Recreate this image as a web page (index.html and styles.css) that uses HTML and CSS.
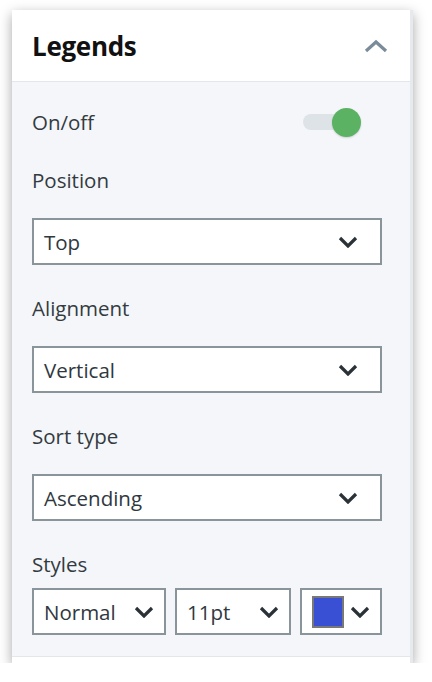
FILE: index.html
```html
<!DOCTYPE html>
<html>
<head>
<meta charset="utf-8">
<link rel="stylesheet" href="styles.css">
</head>
<body>
<div class="panel">
  <div class="header">
    <h1 class="title">Legends</h1>
    <svg class="chev-up" width="24" height="14" viewBox="0 0 24 14"><path d="M2 12 L12 3 L22 12" fill="none" stroke="#7a8c99" stroke-width="3.2"/></svg>
  </div>
  <div class="content">
    <div class="toggle-row">
      <span class="label">On/off</span>
      <div class="toggle"><div class="track"></div><div class="knob"></div></div>
    </div>
    <div class="field">
      <div class="label">Position</div>
      <div class="select"><span>Top</span><svg class="chev" width="20" height="12" viewBox="0 0 20 12"><path d="M2 2 L10 10 L18 2" fill="none" stroke="#2a3238" stroke-width="3.2"/></svg></div>
    </div>
    <div class="field">
      <div class="label">Alignment</div>
      <div class="select"><span>Vertical</span><svg class="chev" width="20" height="12" viewBox="0 0 20 12"><path d="M2 2 L10 10 L18 2" fill="none" stroke="#2a3238" stroke-width="3.2"/></svg></div>
    </div>
    <div class="field">
      <div class="label">Sort type</div>
      <div class="select"><span>Ascending</span><svg class="chev" width="20" height="12" viewBox="0 0 20 12"><path d="M2 2 L10 10 L18 2" fill="none" stroke="#2a3238" stroke-width="3.2"/></svg></div>
    </div>
    <div class="field last">
      <div class="label">Styles</div>
      <div class="style-row">
        <div class="select small s-normal"><span>Normal</span><svg class="chev" width="20" height="12" viewBox="0 0 20 12"><path d="M2 2 L10 10 L18 2" fill="none" stroke="#2a3238" stroke-width="3.2"/></svg></div>
        <div class="select small s-size"><span>11pt</span><svg class="chev" width="20" height="12" viewBox="0 0 20 12"><path d="M2 2 L10 10 L18 2" fill="none" stroke="#2a3238" stroke-width="3.2"/></svg></div>
        <div class="select small s-color"><div class="swatch"></div><svg class="chev" width="20" height="12" viewBox="0 0 20 12"><path d="M2 2 L10 10 L18 2" fill="none" stroke="#2a3238" stroke-width="3.2"/></svg></div>
      </div>
    </div>
  </div>
  <div class="footer"></div>
</div>
</body>
</html>
```
FILE: styles.css
```css
* { box-sizing: border-box; }
html, body { margin: 0; padding: 0; background: #ffffff; }
body { font-family: "Open Sans", "Noto Sans", sans-serif; color: #2f383e; }

.panel {
  margin: 10px 0 0 12px;
  width: 401px;
  background: #ffffff;
  border-right: 3px solid #e6e9ee;
  box-shadow: 0 4px 12px rgba(0,0,0,0.35);
}

.header {
  height: 72px;
  display: flex;
  align-items: center;
  justify-content: space-between;
  padding: 0 20px 0 20px;
  border-bottom: 1px solid #e3e7ec;
}
.title {
  margin: 0;
  font-size: 26px;
  font-weight: 700;
  color: #111;
  letter-spacing: -0.3px;
}
.chev-up { margin-right: 2px; margin-top: 0; }

.content {
  background: #f4f6fa;
  padding: 28px 0 21px 20px;
}
.label {
  font-size: 20.5px;
  line-height: 24px;
  color: #333b40;
}
.toggle-row {
  display: flex;
  align-items: center;
  justify-content: space-between;
  width: 329px;
  height: 24px;
  margin-bottom: 34px;
}
.toggle { position: relative; width: 58px; height: 28px; }
.track {
  position: absolute;
  left: 0; top: 6px;
  width: 40px; height: 16px;
  border-radius: 8px;
  background: #dde3e6;
}
.knob {
  position: absolute;
  left: 29px; top: 0;
  width: 29px; height: 29px;
  border-radius: 50%;
  background: #5ab262;
  box-shadow: 0 1px 2px rgba(0,0,0,0.15);
}

.field { margin-bottom: 31px; }
.field.last { margin-bottom: 0; }
.field .label { margin-bottom: 26px; }
.field.last .label { margin-bottom: 12px; }

.select {
  width: 350px;
  height: 47px;
  background: #fff;
  border: 2px solid #8a949b;
  display: flex;
  align-items: center;
  justify-content: space-between;
  padding: 0 22px 0 10px;
  font-size: 20.5px;
  color: #2f383e;
}
.style-row { display: flex; gap: 9px; }
.select.small { padding-right: 10px; }
.s-normal { width: 134px; }
.s-size { width: 116px; padding-right: 12px; }
.s-color { width: 82px; padding-left: 10px; padding-right: 9px; }
.swatch {
  width: 32px; height: 32px;
  background: #3a50d4;
  border: 2px solid #787878;
}

.footer {
  height: 7px;
  border-top: 1px solid #e3e7ec;
  background: #fff;
}
```
